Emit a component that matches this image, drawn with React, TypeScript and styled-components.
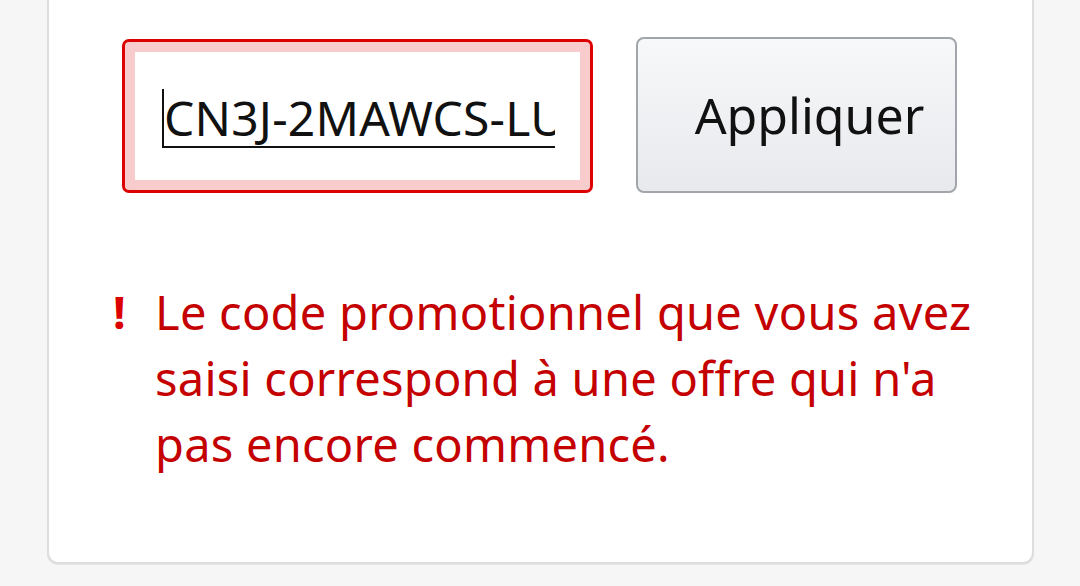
import React from 'react';
import styled, { createGlobalStyle } from 'styled-components';

const GlobalStyle = createGlobalStyle`
  html, body {
    margin: 0;
    padding: 0;
    background: #f6f6f6;
    font-family: "Noto Sans", "Open Sans", sans-serif;
  }
`;

const Page = styled.div`
  width: 1080px;
  height: 586px;
  padding: 0 46px 0 47px;
  box-sizing: border-box;
  overflow: hidden;
`;

const Card = styled.div`
  background: #fff;
  border: 2px solid #dddddd;
  border-top: none;
  border-radius: 0 0 11px 11px;
  padding: 37px 75px 85px 73px;
  box-shadow: 0 1px 0 #e6e6e6;
`;

const PromoRow = styled.div`
  display: flex;
  align-items: center;
  gap: 43px;
`;

const CodeField = styled.div`
  width: 471px;
  height: 154px;
  box-sizing: border-box;
  border: 3px solid #dd0000;
  border-radius: 7px;
  padding: 10px;
  background: #f8cccc;
  margin-top: 1px;
`;

const CodeInner = styled.div`
  height: 100%;
  background: #fff;
  display: flex;
  align-items: center;
  padding: 5px 25px 0 27px;
  box-sizing: border-box;
`;

const CodeText = styled.div`
  flex: 1;
  overflow: hidden;
  white-space: nowrap;
  font-size: 48px;
  line-height: 57px;
  color: #111;
  border-left: 2px solid #111;
  border-bottom: 2px solid #111;
  letter-spacing: 0.2px;
`;

const ApplyButton = styled.button`
  width: 321px;
  height: 156px;
  box-sizing: border-box;
  border: 2.5px solid #a2a6ac;
  border-radius: 8px;
  background: linear-gradient(to bottom, #f7f8fa, #e7e9ec);
  font-family: "Noto Sans", "Open Sans", sans-serif;
  font-size: 50px;
  color: #111;
  padding: 0 0 0 26px;
  text-align: center;
`;

const ErrorBox = styled.div`
  display: flex;
  margin: 86px -50px 0 -10px;
`;

const Bang = styled.span`
  width: 42px;
  flex: none;
  color: #dd0000;
  font-weight: 700;
  font-size: 45px;
  line-height: 66px;
  padding-left: 1px;
`;

const ErrorText = styled.p`
  margin: 0;
  color: #c40000;
  font-size: 47px;
  line-height: 66px;
  letter-spacing: 0.25px;
`;

export default function App() {
  return (
    <>
      <GlobalStyle />
      <Page>
        <Card>
          <PromoRow>
            <CodeField>
              <CodeInner>
                <CodeText>CN3J-2MAWCS-LUQ8</CodeText>
              </CodeInner>
            </CodeField>
            <ApplyButton>Appliquer</ApplyButton>
          </PromoRow>
          <ErrorBox>
            <Bang>!</Bang>
            <ErrorText>
              Le code promotionnel que vous avez saisi correspond à une offre qui n'a pas encore commencé.
            </ErrorText>
          </ErrorBox>
        </Card>
      </Page>
    </>
  );
}
